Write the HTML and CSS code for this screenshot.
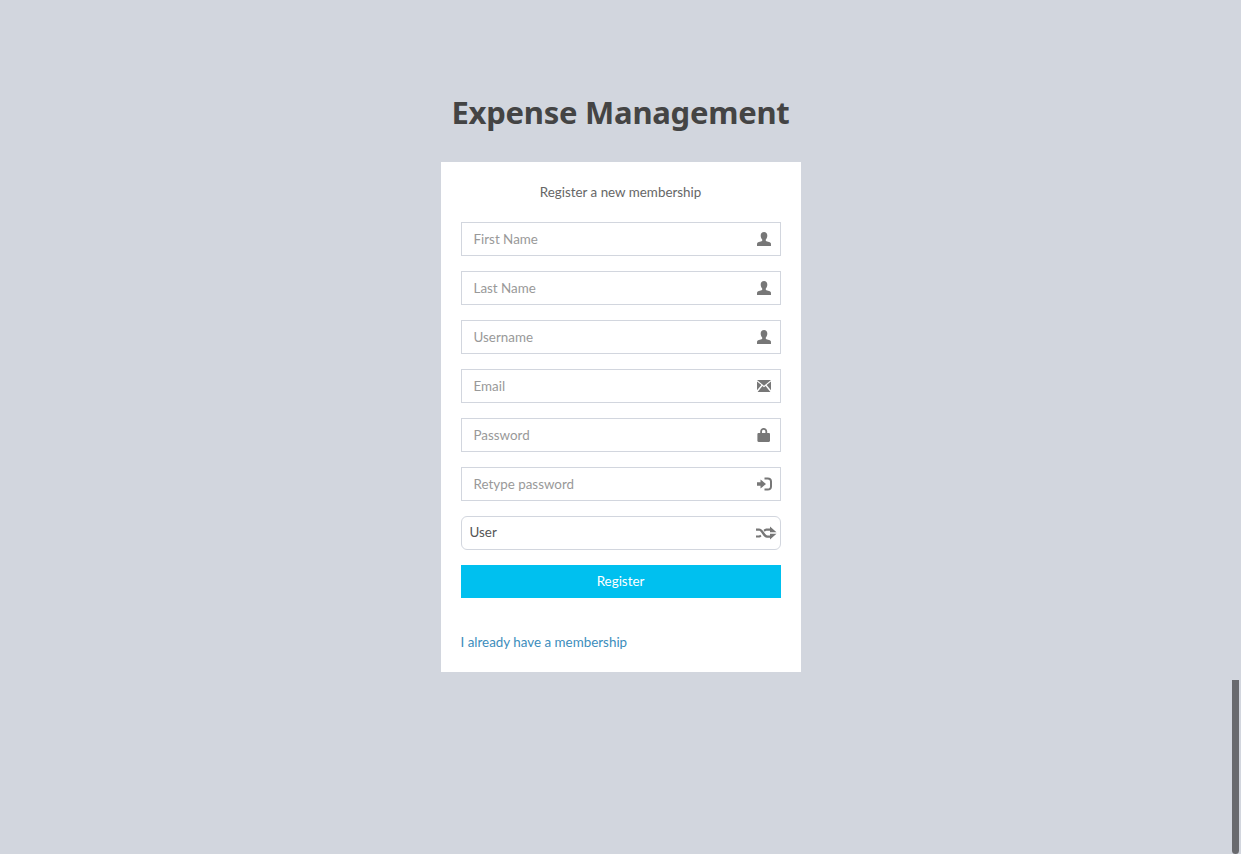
FILE: index.html
```html
<!DOCTYPE html>
<html lang="en">
<head>
  <meta charset="UTF-8">
  <meta name="viewport" content="width=device-width, initial-scale=1.0">
  <title>Expense Management</title>
  <link rel="stylesheet" href="styles.css">
</head>
<body>
  <div class="login-box">
    <div class="login-logo">Expense Management</div>
    <div class="login-body">
      <p class="login-msg">Register a new membership</p>
      <form>
        <div class="field">
          <input type="text" placeholder="First Name">
          <svg class="icon" viewBox="0 0 14 14"><path d="M7 0c2 0 3.300 1.400 3.300 3.600 0 1.600-.6 3-1.500 3.900v1.200c0 .5 4.500 1.200 5 2.300.2.6.2 1.600.2 3H0c0-1.400 0-2.400.2-3 .5-1.100 5-1.800 5-2.300V7.500C4.300 6.600 3.700 5.200 3.700 3.600 3.700 1.400 5 0 7 0z"/></svg>
        </div>
        <div class="field">
          <input type="text" placeholder="Last Name">
          <svg class="icon" viewBox="0 0 14 14"><path d="M7 0c2 0 3.300 1.400 3.300 3.600 0 1.600-.6 3-1.500 3.900v1.200c0 .5 4.500 1.200 5 2.300.2.6.2 1.600.2 3H0c0-1.400 0-2.400.2-3 .5-1.100 5-1.800 5-2.300V7.500C4.300 6.600 3.700 5.200 3.700 3.600 3.700 1.400 5 0 7 0z"/></svg>
        </div>
        <div class="field">
          <input type="text" placeholder="Username">
          <svg class="icon" viewBox="0 0 14 14"><path d="M7 0c2 0 3.300 1.400 3.300 3.600 0 1.600-.6 3-1.500 3.900v1.200c0 .5 4.500 1.200 5 2.300.2.6.2 1.600.2 3H0c0-1.400 0-2.400.2-3 .5-1.100 5-1.800 5-2.300V7.500C4.300 6.600 3.700 5.200 3.700 3.600 3.700 1.400 5 0 7 0z"/></svg>
        </div>
        <div class="field">
          <input type="email" placeholder="Email">
          <svg class="icon" viewBox="0 0 14 14"><path d="M0 1h14L7 6.800zM0 2.600l4.400 3.500L0 11.200zM14 2.600v8.600L9.600 6.100zM5.400 6.900L7 8.200l1.600-1.300L13.400 13H.6z"/></svg>
        </div>
        <div class="field">
          <input type="password" placeholder="Password">
          <svg class="icon" viewBox="0 0 14 14"><path d="M3.200 5V3.600C3.200 1.300 4.800 0 6.700 0s3.500 1.300 3.500 3.600V5h1.600c.7 0 1.200.5 1.200 1.200v6.600c0 .7-.5 1.200-1.200 1.200H1.600c-.7 0-1.200-.5-1.200-1.200V6.200C.4 5.500.9 5 1.600 5zM5 5h3.400V3.600c0-1.100-.7-1.800-1.700-1.800S5 2.500 5 3.600z"/></svg>
        </div>
        <div class="field">
          <input type="password" placeholder="Retype password">
          <svg class="icon icon-login" viewBox="0 0 15 14"><path d="M0 5.200h3.500V2.500L9 7l-5.500 4.500V8.800H0zM7.500 .5h3.300c2.600 0 4.200 1.600 4.200 4v5c0 2.400-1.600 4-4.200 4H7.500v-2h3.300c1.300 0 2.200-.8 2.200-2.100V4.600c0-1.300-.9-2.100-2.200-2.100H7.500z"/></svg>
        </div>
        <div class="field">
          <select>
            <option>User</option>
            <option>Admin</option>
          </select>
          <svg class="icon icon-wide" viewBox="0 0 21 14"><path d="M0 2.500h3c1.800 0 2.900 1 3.900 2.300l2.400 3.300c.7.900 1.200 1.400 2.200 1.400H14v2.200h-3c-1.700 0-2.800-.9-3.700-2.100L4.900 6.100C4.200 5.100 3.800 4.700 2.800 4.700H0zM0 9.500h2.800c.7 0 1.100-.3 1.500-.8l1.200 1.600c-.7.8-1.500 1.200-2.700 1.200H0zM7.500 4C8.500 3 9.500 2.500 11 2.500h3v2.200h-3c-1 0-1.500.2-2.300 1z"/><path d="M14 .5l6.500 5.800H14zM14 13.500l6.500-5.800H14z"/></svg>
        </div>
        <button type="submit" class="btn-register">Register</button>
      </form>
      <a class="login-link" href="#">I already have a membership</a>
    </div>
  </div>
  <div class="scroll-thumb"></div>
</body>
</html>
```

FILE: styles.css
```css
html, body {
  height: 100%;
  overflow: hidden;
}
body {
  margin: 0;
  background-color: #d2d6de;
  font-family: Lato, "Noto Sans", Arial, sans-serif;
  font-size: 13.4px;
  color: #444;
}
.login-box {
  width: 360px;
  margin: 87px auto 0;
}
.login-logo {
  height: 50px;
  line-height: 50px;
  margin-bottom: 25px;
  font-family: "Noto Sans", Arial, sans-serif;
  font-size: 31px;
  font-weight: 700;
  letter-spacing: -0.25px;
  text-align: center;
  color: #444;
  white-space: nowrap;
}
.login-body {
  padding: 20px;
  background: #fff;
  color: #666;
}
.login-msg {
  margin: 0 0 20px;
  line-height: 20px;
  text-align: center;
}
.field {
  position: relative;
  margin-bottom: 15px;
}
.field input, .field select {
  display: block;
  width: 100%;
  height: 34px;
  box-sizing: border-box;
  border: 1px solid #d2d6de;
  background: #fff;
  font: inherit;
  color: #555;
  outline: none;
}
.field input {
  padding: 6px 12px;
  border-radius: 0;
}
.field input::placeholder {
  color: #999;
  opacity: 1;
}
.field select {
  padding: 5px 8px 7px;
  border-radius: 6px;
  appearance: none;
}
.icon {
  position: absolute;
  top: 10px;
  right: 10px;
  width: 14px;
  height: 14px;
  fill: #777;
}
.icon-login {
  width: 15px;
  right: 9px;
}
.icon-wide {
  width: 21px;
  right: 4px;
}
.btn-register {
  display: block;
  width: 100%;
  height: 33px;
  padding: 0 0 2px;
  border: 0;
  background-color: #00c0ef;
  font: inherit;
  color: #fff;
  cursor: pointer;
}
.login-link {
  display: block;
  margin-top: 34px;
  line-height: 20px;
  color: #3c8dbc;
  text-decoration: none;
}
.scroll-thumb {
  position: absolute;
  top: 680px;
  right: 2px;
  bottom: 0;
  width: 7px;
  border-radius: 0 0 4px 4px;
  background-color: #696a6e;
}
```
